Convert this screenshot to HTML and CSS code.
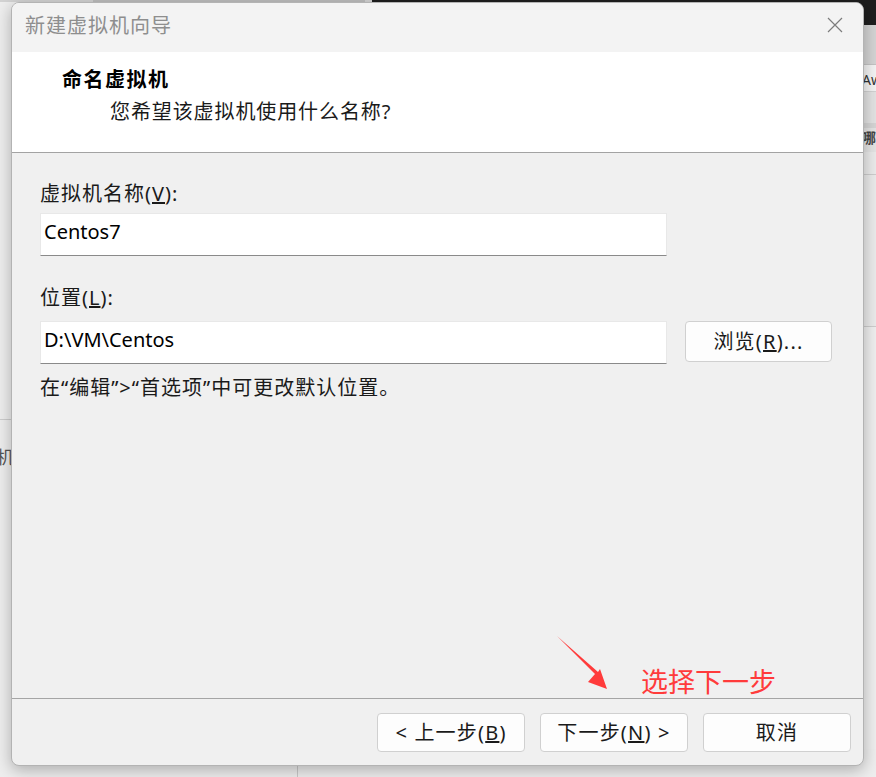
FILE: index.html
```html
<!DOCTYPE html>
<html lang="zh-CN">
<head>
    <meta charset="UTF-8">
    <meta name="viewport" content="width=device-width, initial-scale=1.0">
    <title>新建虚拟机向导</title>
    <link rel="stylesheet" href="styles.css">
</head>
<body>
    <div class="desktop">
        <!-- windows behind the wizard -->
        <div class="bg-win bg-win-left">
            <div class="bg-top"></div>
            <div class="bg-sidebar">
                <div class="bg-sep"></div>
                <div class="bg-item">机</div>
            </div>
        </div>
        <div class="bg-win bg-win-right">
            <div class="bg-titlebar"></div>
            <div class="bg-toolbar"></div>
            <div class="bg-row bg-row-a"><span class="bg-cell">Aw</span></div>
            <div class="bg-row bg-row-b"></div>
            <div class="bg-row bg-row-c"></div>
            <div class="bg-row bg-row-d"><span class="bg-cell bg-cell-bold">哪</span></div>
            <div class="bg-row bg-row-e"></div>
            <div class="bg-row bg-row-f"></div>
            <div class="bg-row bg-row-g"></div>
        </div>

        <div class="wizard">
            <div class="titlebar">
                <span class="title">新建虚拟机向导</span>
                <svg class="close" width="16" height="16" viewBox="0 0 16 16">
                    <path d="M1 1 L15 15 M15 1 L1 15" stroke="#7c7c7c" stroke-width="1.2" fill="none"/>
                </svg>
            </div>

            <div class="header">
                <div class="header-title">命名虚拟机</div>
                <div class="header-sub">您希望该虚拟机使用什么名称?</div>
            </div>

            <div class="content">
                <label class="field-label" for="vm-name">虚拟机名称(<u>V</u>):</label>
                <input class="field-input" type="text" id="vm-name" value="Centos7">

                <label class="field-label label-location" for="vm-path">位置(<u>L</u>):</label>
                <div class="path-row">
                    <input class="field-input" type="text" id="vm-path" value="D:\VM\Centos">
                    <button class="btn btn-browse">浏览(<u>R</u>)...</button>
                </div>
                <div class="hint">在“编辑”>“首选项”中可更改默认位置。</div>
            </div>

            <div class="footer">
                <button class="btn">&lt; 上一步(<u>B</u>)</button>
                <button class="btn">下一步(<u>N</u>) &gt;</button>
                <button class="btn">取消</button>
            </div>

            <!-- red note drawn on top of the screenshot -->
            <svg class="note-arrow" width="60" height="60" viewBox="0 0 60 60">
                <polygon points="2,3 40,41 33,49 52,56 45,36 43,39" fill="#ff3b3b"/>
            </svg>
            <div class="note-text">选择下一步</div>
        </div>
    </div>
</body>
</html>
```

FILE: styles.css
```css
body {
    margin: 0;
    background-color: #ececec;
    font-family: "Noto Sans", "Noto Sans CJK SC", sans-serif;
    color: #1a1a1a;
}

.desktop {
    position: relative;
    width: 876px;
    height: 777px;
    padding: 2px 0 0 11px;
    box-sizing: border-box;
    overflow: hidden;
}

/* background windows */
.bg-win {
    position: absolute;
    top: 0;
    bottom: 0;
}

.bg-win-left {
    left: 0;
    width: 372px;
    background-color: #eeeeee;
}

.bg-top {
    height: 2px;
    background: linear-gradient(to right, #d3d3d3 0 93px, #bdbdbd 93px 365px, #d4d4d4 365px);
}

.bg-sidebar {
    width: 297px;
    height: 775px;
    border-right: 1px solid #c9c9c9;
    background-color: #eeeeee;
}

.bg-sep {
    height: 417px;
    border-bottom: 1px solid #cdcdcd;
}

.bg-item {
    margin: 23px 0 0 -4px;
    font-size: 18px;
    color: #555;
}

.bg-win-right {
    left: 372px;
    right: 0;
    background-color: #eeeeee;
}

.bg-titlebar {
    height: 25px;
    background-color: #1f1f1f;
}

.bg-toolbar {
    height: 39px;
    background-color: #d4d4d4;
    border-bottom: 1px solid #c4c4c4;
}

.bg-row {
    box-sizing: border-box;
    padding-left: 490px;
    font-size: 14px;
    color: #333;
}

.bg-row-a {
    height: 27px;
    line-height: 30px;
    background-color: #f4f4f4;
    border-bottom: 1px solid #d2d2d2;
}

.bg-row-b { height: 31px; background-color: #e3e3e3; }
.bg-row-c { height: 5px; background-color: #d5d5d5; }

.bg-row-d {
    height: 24px;
    line-height: 20px;
    background-color: #e4e4e4;
}

.bg-cell-bold {
    font-weight: bold;
    color: #444;
}

.bg-row-e { height: 23px; background-color: #ebebeb; border-bottom: 1px solid #cdcdcd; }
.bg-row-f { height: 152px; background-color: #ebebeb; border-bottom: 1px solid #cdcdcd; }
.bg-row-g { height: 422px; background-color: #efefef; }

/* wizard dialog */
.wizard {
    position: relative;
    z-index: 1;
    width: 853px;
    height: 764px;
    display: flex;
    flex-direction: column;
    background-color: #f0f0f0;
    border: 1px solid #b3b3b3;
    border-radius: 8px;
    box-shadow: 0 4px 16px rgba(0, 0, 0, 0.28);
    box-sizing: border-box;
    overflow: hidden;
}

.titlebar {
    height: 49px;
    display: flex;
    align-items: center;
    justify-content: space-between;
    padding: 0 20px 6px 13px;
    background-color: #f3f3f3;
    box-sizing: border-box;
}

.title {
    font-size: 20px;
    letter-spacing: 1px;
    color: #8e8e8e;
}

.header {
    height: 101px;
    padding: 14px 0 0 50px;
    background-color: #fff;
    border-bottom: 1px solid #a3a3a3;
    box-sizing: border-box;
}

.header-title {
    font-size: 20px;
    line-height: 28px;
    font-weight: bold;
    letter-spacing: 1.5px;
    color: #000;
}

.header-sub {
    margin: 4px 0 0 48px;
    font-size: 20px;
    line-height: 28px;
    letter-spacing: 0.9px;
    color: #1a1a1a;
}

.content {
    flex: 1;
    padding: 29px 0 0 28px;
}

.field-label {
    display: block;
    font-size: 20px;
    line-height: 24px;
    letter-spacing: 1px;
    margin-bottom: 7px;
}

.label-location {
    margin-top: 30px;
    margin-bottom: 11px;
}

.field-input {
    display: block;
    width: 627px;
    height: 43px;
    padding: 0 3px 7px;
    border: 1px solid #e8e8e8;
    border-bottom: 1px solid #8a8a8a;
    background-color: #fff;
    font-family: inherit;
    font-size: 20px;
    color: #000;
    box-sizing: border-box;
    outline: none;
}

.path-row {
    display: flex;
    align-items: flex-start;
}

.btn {
    width: 148px;
    height: 39px;
    padding: 0;
    border: 1px solid #d0d0d0;
    border-radius: 4px;
    background-color: #fdfdfd;
    font-family: inherit;
    font-size: 20px;
    line-height: 1;
    letter-spacing: 1.2px;
    color: #1a1a1a;
    box-sizing: border-box;
}

.btn-browse {
    width: 147px;
    height: 41px;
    margin-left: 18px;
}

.hint {
    margin-top: 12px;
    font-size: 20px;
    line-height: 24px;
    letter-spacing: 1px;
}

.footer {
    height: 67px;
    display: flex;
    justify-content: flex-end;
    gap: 15px;
    padding: 14px 12px 0 0;
    border-top: 1px solid #a5a5a5;
    box-sizing: border-box;
}

.note-arrow {
    position: absolute;
    left: 543px;
    top: 630px;
}

.note-text {
    position: absolute;
    left: 629px;
    top: 664px;
    font-size: 27px;
    line-height: 1;
    color: #ff3b3b;
    font-family: "Noto Sans CJK SC", sans-serif;
}
```
